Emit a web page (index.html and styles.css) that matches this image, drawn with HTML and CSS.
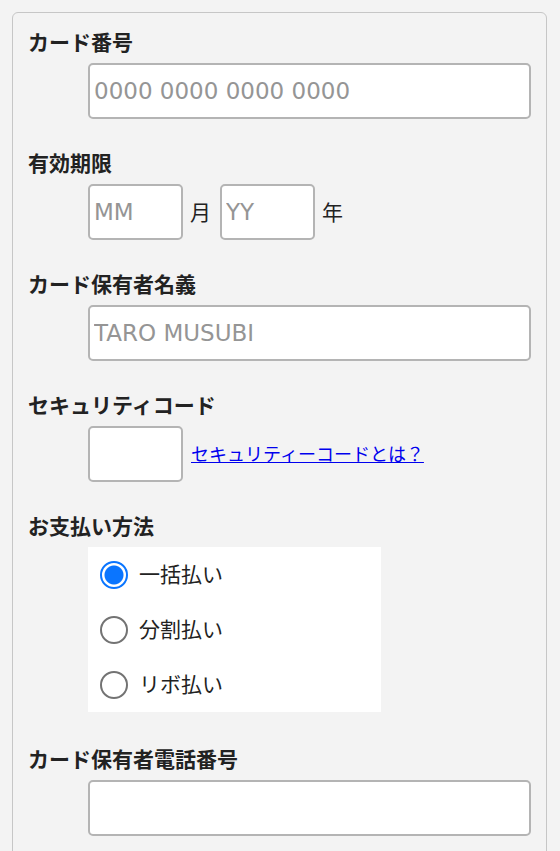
FILE: index.html
```html
<!DOCTYPE html>
<html lang="ja">
<head>
<meta charset="utf-8">
<title>カード情報</title>
<link rel="stylesheet" href="styles.css">
</head>
<body>
<form class="card">
  <div class="field">
    <div class="label">カード番号</div>
    <div class="control">
      <input class="text-input" type="text" placeholder="0000 0000 0000 0000">
    </div>
  </div>
  <div class="field">
    <div class="label">有効期限</div>
    <div class="control row">
      <input class="text-input small" type="text" placeholder="MM">
      <span class="unit">月</span>
      <input class="text-input small" type="text" placeholder="YY">
      <span class="unit">年</span>
    </div>
  </div>
  <div class="field">
    <div class="label">カード保有者名義</div>
    <div class="control">
      <input class="text-input" type="text" placeholder="TARO MUSUBI">
    </div>
  </div>
  <div class="field">
    <div class="label">セキュリティコード</div>
    <div class="control row">
      <input class="text-input small" type="text">
      <a class="help-link" href="#">セキュリティーコードとは？</a>
    </div>
  </div>
  <div class="field field-radio">
    <div class="label">お支払い方法</div>
    <div class="control">
      <div class="radio-box">
        <label class="radio-item"><input class="radio" type="radio" name="pay" checked><span class="radio-text">一括払い</span></label>
        <label class="radio-item"><input class="radio" type="radio" name="pay"><span class="radio-text">分割払い</span></label>
        <label class="radio-item"><input class="radio" type="radio" name="pay"><span class="radio-text">リボ払い</span></label>
      </div>
    </div>
  </div>
  <div class="field">
    <div class="label">カード保有者電話番号</div>
    <div class="control">
      <input class="text-input" type="text">
    </div>
  </div>
</form>
</body>
</html>
```

FILE: styles.css
```css
html, body {
  margin: 0;
  padding: 0;
  background: #f3f3f3;
}

body {
  font-family: "Noto Sans CJK JP", "Noto Sans", sans-serif;
  color: #222;
}

.card {
  display: block;
  margin: 12px 13px 0 12px;
  padding: 14px 15px 40px 15px;
  border: 1px solid #c6c6c6;
  border-radius: 6px;
  background: #f3f3f3;
}

.field {
  margin-bottom: 29px;
}

.field-radio {
  margin-bottom: 32px;
}

.label {
  font-size: 21px;
  font-weight: 700;
  line-height: 28px;
  margin-bottom: 8px;
  color: #222;
}

.control {
  margin-left: 60px;
}

.row {
  display: flex;
  align-items: center;
}

.text-input {
  box-sizing: border-box;
  display: block;
  width: 100%;
  height: 56px;
  margin: 0;
  padding: 0 4px;
  border: 2px solid #b4b4b4;
  border-radius: 5px;
  background: #fff;
  font-family: "DejaVu Sans", "Noto Sans CJK JP", sans-serif;
  font-size: 23px;
  color: #333;
  outline: none;
}

.text-input::placeholder {
  color: #959595;
  opacity: 1;
}

.text-input.small {
  width: 95px;
  flex: none;
}

.unit {
  font-size: 21px;
  line-height: 28px;
  margin: 0 9px 2px 7px;
  color: #222;
}

.help-link {
  margin: 0 0 2px 8px;
  font-size: 18px;
  line-height: 26px;
  color: #0000ee;
  text-decoration: underline;
}

.radio-box {
  width: 293px;
  height: 165px;
  background: #fff;
  box-sizing: border-box;
}

.radio-item {
  display: flex;
  align-items: center;
  height: 55px;
  padding-left: 12px;
  font-size: 21px;
  color: #222;
}

.radio-text {
  line-height: 28px;
  margin-bottom: 3px;
}

.radio {
  appearance: none;
  -webkit-appearance: none;
  box-sizing: border-box;
  width: 28px;
  height: 28px;
  margin: 0 11px 0 0;
  border: 2px solid #737373;
  border-radius: 50%;
  background: #fff;
  flex: none;
}

.radio:checked {
  border-color: #0a75ff;
  background: radial-gradient(circle, #0a75ff 0 9px, #fff 10px);
}
```
